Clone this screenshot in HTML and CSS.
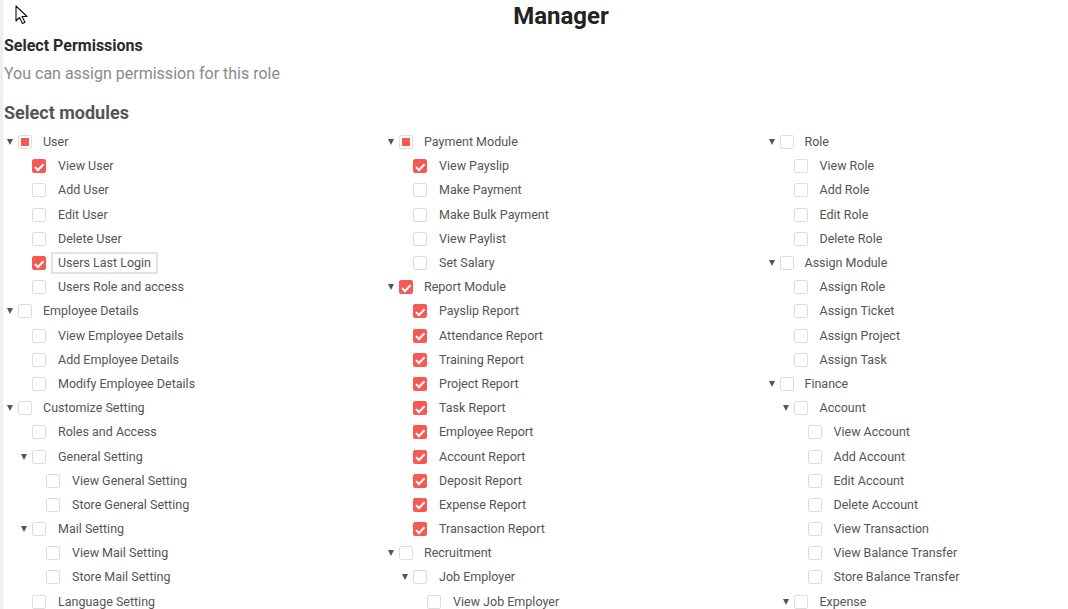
FILE: index.html
```html
<!DOCTYPE html>
<html>
<head>
<meta charset="utf-8">
<link rel="stylesheet" href="styles.css">
</head>
<body>
<svg class="cursor" width="14" height="20" viewBox="0 0 14 20"><path d="M1 1 L1 16 L4.5 12.5 L7.5 18.5 L10 17.3 L7 11.5 L12 11.5 Z" fill="#fff" stroke="#111" stroke-width="1.1" stroke-linejoin="round"/></svg>
<div class="page">
  <h1 class="title">Manager</h1>
  <h2 class="perm-title">Select Permissions</h2>
  <p class="perm-sub">You can assign permission for this role</p>
  <h3 class="mod-title">Select modules</h3>
  <div class="cols">
    <div class="col">
      <div class="row l0"><span class="arrow"></span><span class="cb half"></span><span class="lbl">User</span></div>
      <div class="row l1"><span class="sw"></span><span class="cb on"></span><span class="lbl">View User</span></div>
      <div class="row l1"><span class="sw"></span><span class="cb"></span><span class="lbl">Add User</span></div>
      <div class="row l1"><span class="sw"></span><span class="cb"></span><span class="lbl">Edit User</span></div>
      <div class="row l1"><span class="sw"></span><span class="cb"></span><span class="lbl">Delete User</span></div>
      <div class="row l1"><span class="sw"></span><span class="cb on"></span><span class="lbl focus">Users Last Login</span></div>
      <div class="row l1"><span class="sw"></span><span class="cb"></span><span class="lbl">Users Role and access</span></div>
      <div class="row l0"><span class="arrow"></span><span class="cb"></span><span class="lbl">Employee Details</span></div>
      <div class="row l1"><span class="sw"></span><span class="cb"></span><span class="lbl">View Employee Details</span></div>
      <div class="row l1"><span class="sw"></span><span class="cb"></span><span class="lbl">Add Employee Details</span></div>
      <div class="row l1"><span class="sw"></span><span class="cb"></span><span class="lbl">Modify Employee Details</span></div>
      <div class="row l0"><span class="arrow"></span><span class="cb"></span><span class="lbl">Customize Setting</span></div>
      <div class="row l1"><span class="sw"></span><span class="cb"></span><span class="lbl">Roles and Access</span></div>
      <div class="row l1"><span class="arrow"></span><span class="cb"></span><span class="lbl">General Setting</span></div>
      <div class="row l2"><span class="sw"></span><span class="cb"></span><span class="lbl">View General Setting</span></div>
      <div class="row l2"><span class="sw"></span><span class="cb"></span><span class="lbl">Store General Setting</span></div>
      <div class="row l1"><span class="arrow"></span><span class="cb"></span><span class="lbl">Mail Setting</span></div>
      <div class="row l2"><span class="sw"></span><span class="cb"></span><span class="lbl">View Mail Setting</span></div>
      <div class="row l2"><span class="sw"></span><span class="cb"></span><span class="lbl">Store Mail Setting</span></div>
      <div class="row l1"><span class="sw"></span><span class="cb"></span><span class="lbl">Language Setting</span></div>
    </div>
    <div class="col">
      <div class="row l0"><span class="arrow"></span><span class="cb half"></span><span class="lbl">Payment Module</span></div>
      <div class="row l1"><span class="sw"></span><span class="cb on"></span><span class="lbl">View Payslip</span></div>
      <div class="row l1"><span class="sw"></span><span class="cb"></span><span class="lbl">Make Payment</span></div>
      <div class="row l1"><span class="sw"></span><span class="cb"></span><span class="lbl">Make Bulk Payment</span></div>
      <div class="row l1"><span class="sw"></span><span class="cb"></span><span class="lbl">View Paylist</span></div>
      <div class="row l1"><span class="sw"></span><span class="cb"></span><span class="lbl">Set Salary</span></div>
      <div class="row l0"><span class="arrow"></span><span class="cb on"></span><span class="lbl">Report Module</span></div>
      <div class="row l1"><span class="sw"></span><span class="cb on"></span><span class="lbl">Payslip Report</span></div>
      <div class="row l1"><span class="sw"></span><span class="cb on"></span><span class="lbl">Attendance Report</span></div>
      <div class="row l1"><span class="sw"></span><span class="cb on"></span><span class="lbl">Training Report</span></div>
      <div class="row l1"><span class="sw"></span><span class="cb on"></span><span class="lbl">Project Report</span></div>
      <div class="row l1"><span class="sw"></span><span class="cb on"></span><span class="lbl">Task Report</span></div>
      <div class="row l1"><span class="sw"></span><span class="cb on"></span><span class="lbl">Employee Report</span></div>
      <div class="row l1"><span class="sw"></span><span class="cb on"></span><span class="lbl">Account Report</span></div>
      <div class="row l1"><span class="sw"></span><span class="cb on"></span><span class="lbl">Deposit Report</span></div>
      <div class="row l1"><span class="sw"></span><span class="cb on"></span><span class="lbl">Expense Report</span></div>
      <div class="row l1"><span class="sw"></span><span class="cb on"></span><span class="lbl">Transaction Report</span></div>
      <div class="row l0"><span class="arrow"></span><span class="cb"></span><span class="lbl">Recruitment</span></div>
      <div class="row l1"><span class="arrow"></span><span class="cb"></span><span class="lbl">Job Employer</span></div>
      <div class="row l2"><span class="sw"></span><span class="cb"></span><span class="lbl">View Job Employer</span></div>
    </div>
    <div class="col">
      <div class="row l0"><span class="arrow"></span><span class="cb"></span><span class="lbl">Role</span></div>
      <div class="row l1"><span class="sw"></span><span class="cb"></span><span class="lbl">View Role</span></div>
      <div class="row l1"><span class="sw"></span><span class="cb"></span><span class="lbl">Add Role</span></div>
      <div class="row l1"><span class="sw"></span><span class="cb"></span><span class="lbl">Edit Role</span></div>
      <div class="row l1"><span class="sw"></span><span class="cb"></span><span class="lbl">Delete Role</span></div>
      <div class="row l0"><span class="arrow"></span><span class="cb"></span><span class="lbl">Assign Module</span></div>
      <div class="row l1"><span class="sw"></span><span class="cb"></span><span class="lbl">Assign Role</span></div>
      <div class="row l1"><span class="sw"></span><span class="cb"></span><span class="lbl">Assign Ticket</span></div>
      <div class="row l1"><span class="sw"></span><span class="cb"></span><span class="lbl">Assign Project</span></div>
      <div class="row l1"><span class="sw"></span><span class="cb"></span><span class="lbl">Assign Task</span></div>
      <div class="row l0"><span class="arrow"></span><span class="cb"></span><span class="lbl">Finance</span></div>
      <div class="row l1"><span class="arrow"></span><span class="cb"></span><span class="lbl">Account</span></div>
      <div class="row l2"><span class="sw"></span><span class="cb"></span><span class="lbl">View Account</span></div>
      <div class="row l2"><span class="sw"></span><span class="cb"></span><span class="lbl">Add Account</span></div>
      <div class="row l2"><span class="sw"></span><span class="cb"></span><span class="lbl">Edit Account</span></div>
      <div class="row l2"><span class="sw"></span><span class="cb"></span><span class="lbl">Delete Account</span></div>
      <div class="row l2"><span class="sw"></span><span class="cb"></span><span class="lbl">View Transaction</span></div>
      <div class="row l2"><span class="sw"></span><span class="cb"></span><span class="lbl">View Balance Transfer</span></div>
      <div class="row l2"><span class="sw"></span><span class="cb"></span><span class="lbl">Store Balance Transfer</span></div>
      <div class="row l1"><span class="arrow"></span><span class="cb"></span><span class="lbl">Expense</span></div>
    </div>
  </div>
</div>
</body>
</html>
```
FILE: styles.css
```css
html, body {
  margin: 0;
  padding: 0;
  overflow: hidden;
  background: #fff;
}
body {
  font-family: Roboto, "Liberation Sans", sans-serif;
  border-left: 3px solid #eeeef4;
  height: 609px;
  box-sizing: border-box;
}
.cursor {
  position: absolute;
  left: 15px;
  top: 5px;
}
.page {
  padding-left: 1px;
}
.title {
  margin: 0;
  height: 32px;
  line-height: 32px;
  font-size: 24px;
  font-weight: 700;
  color: #222;
  text-align: center;
  padding-left: 50px;
}
.perm-title {
  margin: 2px 0 0;
  height: 24px;
  line-height: 24px;
  font-size: 16px;
  font-weight: 700;
  color: #2b2b2b;
}
.perm-sub {
  margin: 4px 0 0;
  height: 24px;
  line-height: 24px;
  font-size: 16px;
  color: #8a8a8a;
}
.mod-title {
  margin: 15px 0 0;
  height: 24px;
  line-height: 24px;
  font-size: 18px;
  font-weight: 700;
  color: #555;
}
.cols {
  margin-top: 5px;
  display: grid;
  grid-template-columns: 381px 380.5px 381px;
}
.row {
  height: 24.2px;
  display: flex;
  align-items: center;
}
.l1 { padding-left: 14px; }
.l2 { padding-left: 28px; }
.sw, .arrow {
  width: 14px;
  height: 14px;
  flex: none;
  position: relative;
}
.arrow::after {
  content: "";
  position: absolute;
  left: 3px;
  top: 4px;
  border-left: 3.5px solid transparent;
  border-right: 3.5px solid transparent;
  border-top: 6px solid #555;
}
.cb {
  width: 14px;
  height: 14px;
  flex: none;
  box-sizing: border-box;
  border: 1px solid #dedede;
  border-radius: 2px;
  background: #fff;
  position: relative;
}
.cb.half::after {
  content: "";
  position: absolute;
  left: 2px;
  top: 2px;
  width: 8px;
  height: 8px;
  background: #f65a54;
}
.cb.on {
  background: #f65a54;
  border-color: #f65a54;
}
.cb.on::after {
  content: "";
  position: absolute;
  left: 3.5px;
  top: 1.5px;
  width: 3px;
  height: 6.5px;
  border-right: 2px solid #fff;
  border-bottom: 2px solid #fff;
  transform: rotate(45deg);
}
.lbl {
  margin-left: 5px;
  padding: 0 6px;
  height: 20px;
  line-height: 20px;
  border: 1px solid transparent;
  font-size: 12.5px;
  color: #555;
  white-space: nowrap;
}
.l0 .lbl { margin-left: 4px; }
.lbl.focus {
  border: 2px solid #e2e2e2;
  padding: 0 5px;
  height: 18px;
  line-height: 18px;
}
```
